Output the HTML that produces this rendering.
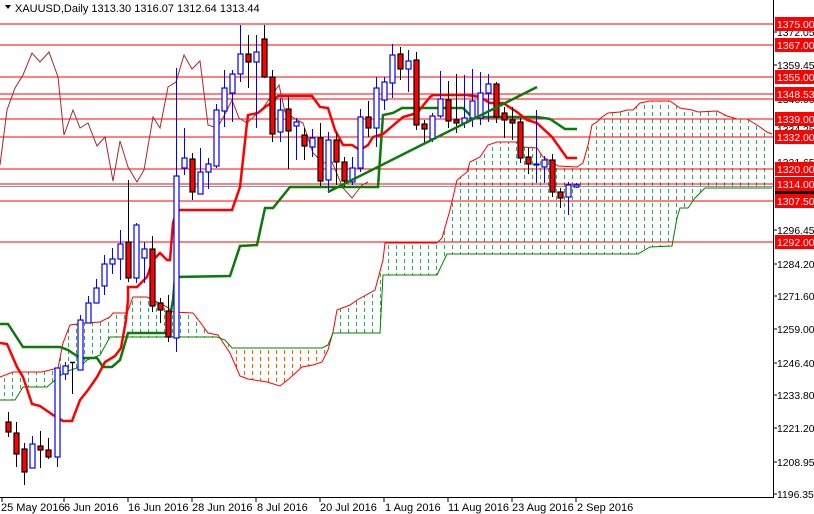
<!DOCTYPE html>
<html><head><meta charset="utf-8"><style>
html,body{margin:0;padding:0;background:#fff;width:814px;height:514px;overflow:hidden}
svg{display:block;font-family:"Liberation Sans",Arial,sans-serif;font-size:11px}
.ax text{font-size:10.4px}
</style></head><body>
<svg id="s" width="814" height="514" viewBox="0 0 814 514" xmlns="http://www.w3.org/2000/svg">
<defs>
<pattern id="pg" width="8" height="7" patternUnits="userSpaceOnUse" x="4" y="0"><line x1="0.5" y1="0" x2="0.5" y2="4" stroke="#2eaa5a" stroke-width="1"/></pattern>
<pattern id="po" width="8" height="7" patternUnits="userSpaceOnUse" x="4" y="0"><line x1="0.5" y1="0" x2="0.5" y2="4" stroke="#ff5a00" stroke-width="1"/></pattern>
<clipPath id="cg"><rect x="0" y="0" width="228" height="500"/><rect x="327" y="0" width="446" height="500"/></clipPath>
<clipPath id="co"><rect x="228" y="0" width="99" height="500"/></clipPath>
</defs>
<g id="cloud"></g>
<g stroke="#ff0000" stroke-width="1.3" shape-rendering="crispEdges">
<line x1="0" y1="24" x2="773" y2="24"/><line x1="0" y1="45" x2="773" y2="45"/>
<line x1="0" y1="77" x2="773" y2="77"/><line x1="0" y1="94" x2="773" y2="94"/>
<line x1="0" y1="99" x2="773" y2="99"/><line x1="0" y1="119" x2="773" y2="119"/>
<line x1="0" y1="137" x2="773" y2="137"/><line x1="0" y1="169" x2="773" y2="169"/>
<line x1="0" y1="184" x2="773" y2="184"/><line x1="0" y1="201" x2="773" y2="201"/>
<line x1="0" y1="242" x2="773" y2="242"/>
</g>
<line x1="0" y1="186.5" x2="773" y2="186.5" stroke="#8899aa" stroke-width="1"/>
<g id="lines"></g>
<g id="candles"></g>
<line x1="328" y1="192" x2="537" y2="87" stroke="#0a7a0a" stroke-width="2.5"/>
<line x1="773.5" y1="0" x2="773.5" y2="497" stroke="#000"/>
<line x1="0" y1="497.5" x2="774" y2="497.5" stroke="#000"/>
<g stroke="#000">
<line x1="2" y1="497" x2="2" y2="502"/><line x1="64" y1="497" x2="64" y2="502"/><line x1="128" y1="497" x2="128" y2="502"/><line x1="192" y1="497" x2="192" y2="502"/><line x1="256" y1="497" x2="256" y2="502"/><line x1="320" y1="497" x2="320" y2="502"/><line x1="384" y1="497" x2="384" y2="502"/><line x1="448" y1="497" x2="448" y2="502"/><line x1="512" y1="497" x2="512" y2="502"/><line x1="576" y1="497" x2="576" y2="502"/>
</g>
<g fill="#000">
<text x="1" y="511">25 May 2016</text><text x="64" y="511">6 Jun 2016</text><text x="128" y="511">16 Jun 2016</text><text x="192" y="511">28 Jun 2016</text><text x="257" y="511">8 Jul 2016</text><text x="320" y="511">20 Jul 2016</text><text x="385" y="511">1 Aug 2016</text><text x="448" y="511">11 Aug 2016</text><text x="512" y="511">23 Aug 2016</text><text x="577" y="511">2 Sep 2016</text>
</g>
<g class="ax" fill="#000">
<text x="777" y="36">1372.05</text><text x="777" y="69">1359.45</text><text x="777" y="133">1334.25</text><text x="777" y="166">1321.65</text><text x="777" y="198">1309.05</text><text x="777" y="234">1296.45</text><text x="777" y="268">1284.20</text><text x="777" y="300">1271.60</text><text x="777" y="333">1259.00</text><text x="777" y="367">1246.40</text><text x="777" y="399">1233.80</text><text x="777" y="432">1221.20</text><text x="777" y="466">1208.95</text><text x="777" y="498">1196.35</text>
<text x="777" y="103">1346.00</text>
</g>
<rect x="775" y="182" width="39" height="12" fill="#000"/>
<g stroke="#000"><line x1="773" y1="32" x2="777" y2="32"/><line x1="773" y1="65" x2="777" y2="65"/><line x1="773" y1="230" x2="777" y2="230"/><line x1="773" y1="264" x2="777" y2="264"/><line x1="773" y1="296" x2="777" y2="296"/><line x1="773" y1="329" x2="777" y2="329"/><line x1="773" y1="363" x2="777" y2="363"/><line x1="773" y1="395" x2="777" y2="395"/><line x1="773" y1="428" x2="777" y2="428"/><line x1="773" y1="462" x2="777" y2="462"/><line x1="773" y1="494" x2="777" y2="494"/></g>
<g class="ax" fill="#fff">
<rect x="775" y="17" width="39" height="14" fill="#ff0000"/><text x="777" y="28">1375.00</text>
<rect x="775" y="38" width="39" height="14" fill="#ff0000"/><text x="777" y="49">1367.00</text>
<rect x="775" y="70" width="39" height="14" fill="#ff0000"/><text x="777" y="81">1355.00</text>
<rect x="775" y="87" width="39" height="14" fill="#ff0000"/><text x="777" y="98">1348.53</text>
<rect x="775" y="112" width="39" height="14" fill="#ff0000"/><text x="777" y="123">1339.00</text>
<rect x="775" y="130" width="39" height="14" fill="#ff0000"/><text x="777" y="141">1332.00</text>
<rect x="775" y="162" width="39" height="14" fill="#ff0000"/><text x="777" y="173">1320.00</text>
<rect x="775" y="177" width="39" height="14" fill="#ff0000"/><text x="777" y="188">1314.00</text>
<rect x="775" y="194" width="39" height="14" fill="#ff0000"/><text x="777" y="205">1307.50</text>
<rect x="775" y="235" width="39" height="14" fill="#ff0000"/><text x="777" y="246">1292.00</text>
</g>
<rect x="0" y="0" width="240" height="17" fill="#fff"/>
<path d="M5 5 L11 5 L8 9 Z" fill="#000"/>
<text x="15" y="12" fill="#000">XAUUSD,Daily  1313.30 1316.07 1312.64 1313.44</text>
</svg>
<script>
var NS="http://www.w3.org/2000/svg";
function el(p,t,a){var e=document.createElementNS(NS,t);for(var k in a)e.setAttribute(k,a[k]);p.appendChild(e);return e;}
function pts(a){return a.map(function(p){return p.join(',')}).join(' ');}
var R=[[0,377],[13,372],[42,372],[58,368],[63,343],[70,325],[85,323],[100,322],[110,317],[113,313],[127,313],[133,297],[147,297],[153,300],[167,307],[173,312],[193,313],[200,322],[208,333],[218,335],[230,353],[240,376],[248,379],[267,382],[280,386],[290,378],[302,367],[313,365],[322,362],[328,350],[333,332],[337,310],[350,305],[357,300],[375,290],[383,260],[385,243],[437,243],[442,238],[450,210],[457,180],[467,172],[470,162],[480,157],[488,145],[497,142],[517,142],[522,147],[537,148],[543,157],[552,162],[558,166],[577,167],[583,163],[588,145],[592,125],[597,122],[602,117],[608,113],[620,112],[627,110],[633,110],[640,103],[650,101],[670,101],[680,108],[692,110],[698,112],[717,111],[727,116],[737,119],[747,119],[757,125],[767,132],[772,134]];
var G=[[0,400],[15,400],[23,387],[47,387],[55,380],[65,372],[80,367],[87,360],[100,355],[110,337],[147,337],[193,337],[217,337],[225,340],[232,348],[322,348],[328,345],[333,333],[380,333],[383,275],[437,275],[447,254],[638,254],[650,247],[672,246],[677,218],[680,208],[688,208],[695,198],[705,188],[767,188],[772,188]];
var poly=R.concat(G.slice().reverse());
var cl=document.getElementById('cloud');
el(cl,'polygon',{points:pts(poly),fill:'url(#pg)','clip-path':'url(#cg)'});
el(cl,'polygon',{points:pts(poly),fill:'url(#po)','clip-path':'url(#co)'});
el(cl,'polyline',{points:pts(R),fill:'none',stroke:'#ff0000','stroke-width':1});
el(cl,'polyline',{points:pts(G),fill:'none',stroke:'#008000','stroke-width':1});
var L=document.getElementById('lines');
var chik=[[0,165],[7,110],[15,88],[23,75],[32,53],[40,62],[49,52],[58,77],[64,135],[73,110],[80,128],[88,123],[97,146],[105,137],[113,181],[120,141],[128,167],[137,182],[144,170],[153,117],[160,128],[168,87],[176,82],[184,55],[192,69],[200,61],[208,125],[217,128],[223,118],[232,100],[239,118],[247,123],[263,108],[279,85],[285,112],[297,120],[303,123],[313,153],[323,163],[332,162],[343,188],[352,198],[362,185],[368,182]];
el(L,'polyline',{points:pts(chik),fill:'none',stroke:'#a52a2a','stroke-width':1});
var kij=[[0,324],[8,324],[23,347],[60,347],[68,350],[80,358],[97,358],[103,367],[112,367],[120,360],[128,333],[167,333],[173,300],[175,277],[230,276],[240,246],[257,245],[265,208],[273,208],[290,187],[378,187],[383,115],[393,113],[402,108],[463,108],[472,117],[537,117],[550,119],[565,129],[577,129]];
el(L,'polyline',{points:pts(kij),fill:'none',stroke:'#0a7a0a','stroke-width':2.5});
var ten=[[0,343],[7,344],[17,367],[23,377],[32,404],[40,406],[53,415],[63,421],[72,421],[80,400],[88,390],[97,377],[105,362],[115,356],[121,348],[126,320],[128,300],[128,287],[137,287],[147,277],[153,260],[160,253],[167,260],[170,260],[173,223],[177,210],[232,210],[240,187],[247,123],[248,115],[258,113],[265,107],[273,102],[278,96],[312,96],[320,107],[328,108],[335,130],[343,145],[352,145],[360,150],[368,145],[373,137],[383,134],[403,117],[417,113],[430,97],[433,95],[467,95],[480,97],[490,103],[503,103],[517,112],[527,120],[537,123],[552,137],[567,158],[577,158]];
el(L,'polyline',{points:pts(ten),fill:'none',stroke:'#ff0000','stroke-width':2.5});
var C=[[8,422,432,412,437,'r'],[16,433,454,422,467,'r'],[24,449,472,443,485,'r'],[32,444,468,436,468,'b'],[40,446,450,431,468,'r'],[48,450,457,438,459,'r'],[57,368,457,368,467,'b'],[65,366,374,362,380,'b'],[72,362,363,362,394,'d'],[80,320,370,315,370,'b'],[88,303,323,296,314,'b'],[96,288,303,279,303,'b'],[104,264,286,255,295,'b'],[112,259,264,248,274,'b'],[120,244,259,230,280,'b'],[128,242,278,180,282,'r'],[136,225,278,223,283,'b'],[144,249,258,242,283,'b'],[152,249,306,236,312,'r'],[160,303,310,298,323,'r'],[168,311,337,295,342,'r'],[176,176,338,68,352,'b'],[184,158,168,128,175,'b'],[192,159,192,153,200,'r'],[200,172,194,148,194,'b'],[208,164,172,158,189,'b'],[216,110,166,104,168,'b'],[224,88,111,70,127,'b'],[232,74,93,70,122,'b'],[240,54,74,25,82,'b'],[248,54,62,35,88,'r'],[256,52,62,35,128,'b'],[264,39,77,25,78,'r'],[272,77,134,70,142,'r'],[280,110,132,98,142,'b'],[288,109,131,97,169,'r'],[296,122,126,118,160,'b'],[304,135,146,128,160,'r'],[312,138,147,129,157,'b'],[320,138,181,123,186,'r'],[328,140,180,132,193,'b'],[336,140,162,133,185,'r'],[344,162,181,157,187,'r'],[352,168,182,157,185,'b'],[360,117,168,109,172,'b'],[368,117,128,101,137,'r'],[376,88,128,77,147,'b'],[384,82,100,77,110,'b'],[392,55,83,44,98,'b'],[400,54,69,47,80,'r'],[408,61,69,50,92,'b'],[416,60,125,52,130,'r'],[424,124,129,120,143,'r'],[432,116,139,113,142,'b'],[440,99,116,71,118,'b'],[448,100,121,81,128,'r'],[456,120,123,74,133,'r'],[464,118,123,75,128,'b'],[472,101,118,69,127,'b'],[480,93,118,72,125,'b'],[488,84,93,74,122,'b'],[496,84,117,82,123,'r'],[504,113,120,107,138,'r'],[512,120,123,107,140,'r'],[520,122,158,118,163,'r'],[528,157,164,148,174,'r'],[536,164,165,110,183,'b'],[544,160,167,156,183,'b'],[552,160,192,154,197,'r'],[560,192,198,188,208,'r'],[568,185,197,182,215,'b'],[576,185,187,183,188,'b']];
var K=document.getElementById('candles');
C.forEach(function(c){var x=c[0],t=c[1],b=c[2],h=c[3],l=c[4],k=c[5];
 var col=k=='b'?'#0000ff':'#000';
 el(K,'line',{x1:x+.5,y1:h,x2:x+.5,y2:l,stroke:col,'stroke-width':1});
 if(k=='d'){el(K,'line',{x1:x-2,y1:t+.5,x2:x+3,y2:t+.5,stroke:'#000','stroke-width':1.5});return;}
 el(K,'rect',{x:x-2,y:t,width:5,height:Math.max(1,b-t),fill:k=='r'?'#ff0000':'#fff',stroke:col,'stroke-width':1.2});
});
</script>
</body></html>
